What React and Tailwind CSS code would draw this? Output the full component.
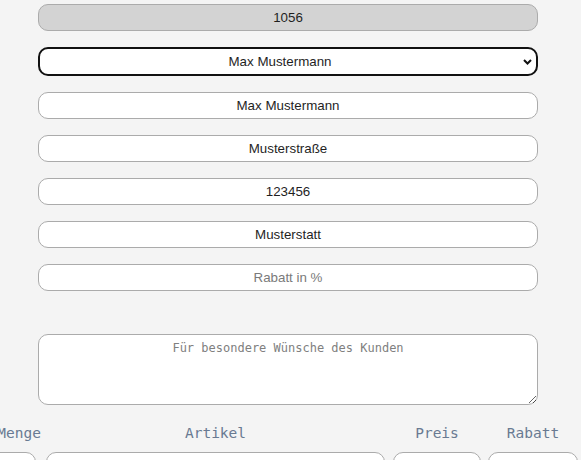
import { useState } from 'react';

const fieldBase =
  'w-full h-[27px] rounded-[10px] border border-[#ababab] text-center text-[13.33px] text-[#1f1f1f] placeholder:text-[#7a7a7a] outline-none';

const Field = ({ value, placeholder, disabled }) => (
  <input
    className={`${fieldBase} ${disabled ? 'bg-[#d3d3d3]' : 'bg-white'}`}
    style={{ fontFamily: '"Liberation Sans", Arial, sans-serif' }}
    defaultValue={value}
    placeholder={placeholder}
    disabled={disabled}
  />
);

const App = () => {
  const [kunde, setKunde] = useState('Max Mustermann');

  return (
    <div className="min-h-screen bg-[#f4f4f4] overflow-hidden pt-[4px]">
      <div className="ml-[38px] w-[500px] flex flex-col gap-[16px]">
        <Field value="1056" disabled />

        {/* Kundenauswahl */}
        <div className="relative">
          <select
            value={kunde}
            onChange={e => setKunde(e.target.value)}
            className="appearance-none w-full h-[29px] rounded-[10px] border-2 border-[#111] bg-white text-center pr-[16px] text-[13.33px] text-[#1f1f1f] outline-none"
            style={{ fontFamily: '"Liberation Sans", Arial, sans-serif' }}
          >
            <option>Max Mustermann</option>
            <option>Erika Musterfrau</option>
          </select>
          <svg
            className="absolute right-[6px] top-[12px] pointer-events-none"
            width="9"
            height="6"
            viewBox="0 0 9 6"
          >
            <path d="M1 1 L4.5 4.5 L8 1" fill="none" stroke="#111" strokeWidth="2" />
          </svg>
        </div>

        <Field value="Max Mustermann" />
        <Field value="Musterstraße" />
        <Field value="123456" />
        <Field value="Musterstatt" />
        <Field placeholder="Rabatt in %" />

        <textarea
          className="mt-[27px] w-full h-[71px] rounded-[10px] border border-[#ababab] bg-white text-center pt-[4px] px-2 text-[12px] text-[#1f1f1f] placeholder:text-[#808080] outline-none"
          style={{ fontFamily: '"DejaVu Sans Mono", monospace' }}
          placeholder="Für besondere Wünsche des Kunden"
        />
      </div>

      {/* Positionen */}
      <div
        className="flex -ml-[24px] mt-[18px] text-[14.5px] text-[#697a92]"
        style={{ fontFamily: '"DejaVu Sans Mono", monospace' }}
      >
        <div className="w-[60px] flex flex-col">
          <div className="h-[20px] leading-[20px] text-right -mr-[5px]">Menge</div>
          <input className="mt-[9px] h-[27px] rounded-[10px] border border-[#ababab] bg-white" />
        </div>
        <div className="ml-[10px] w-[339px] flex flex-col">
          <div className="h-[20px] leading-[20px] text-center">Artikel</div>
          <input className="mt-[9px] h-[27px] rounded-[10px] border border-[#ababab] bg-white" />
        </div>
        <div className="ml-[8px] w-[88px] flex flex-col">
          <div className="h-[20px] leading-[20px] text-center">Preis</div>
          <input className="mt-[9px] h-[27px] rounded-[10px] border border-[#ababab] bg-white" />
        </div>
        <div className="ml-[7px] w-[90px] flex flex-col shrink-0">
          <div className="h-[20px] leading-[20px] text-center">Rabatt</div>
          <input className="mt-[9px] h-[27px] rounded-[10px] border border-[#ababab] bg-white" />
        </div>
      </div>
    </div>
  );
};

export default App;
